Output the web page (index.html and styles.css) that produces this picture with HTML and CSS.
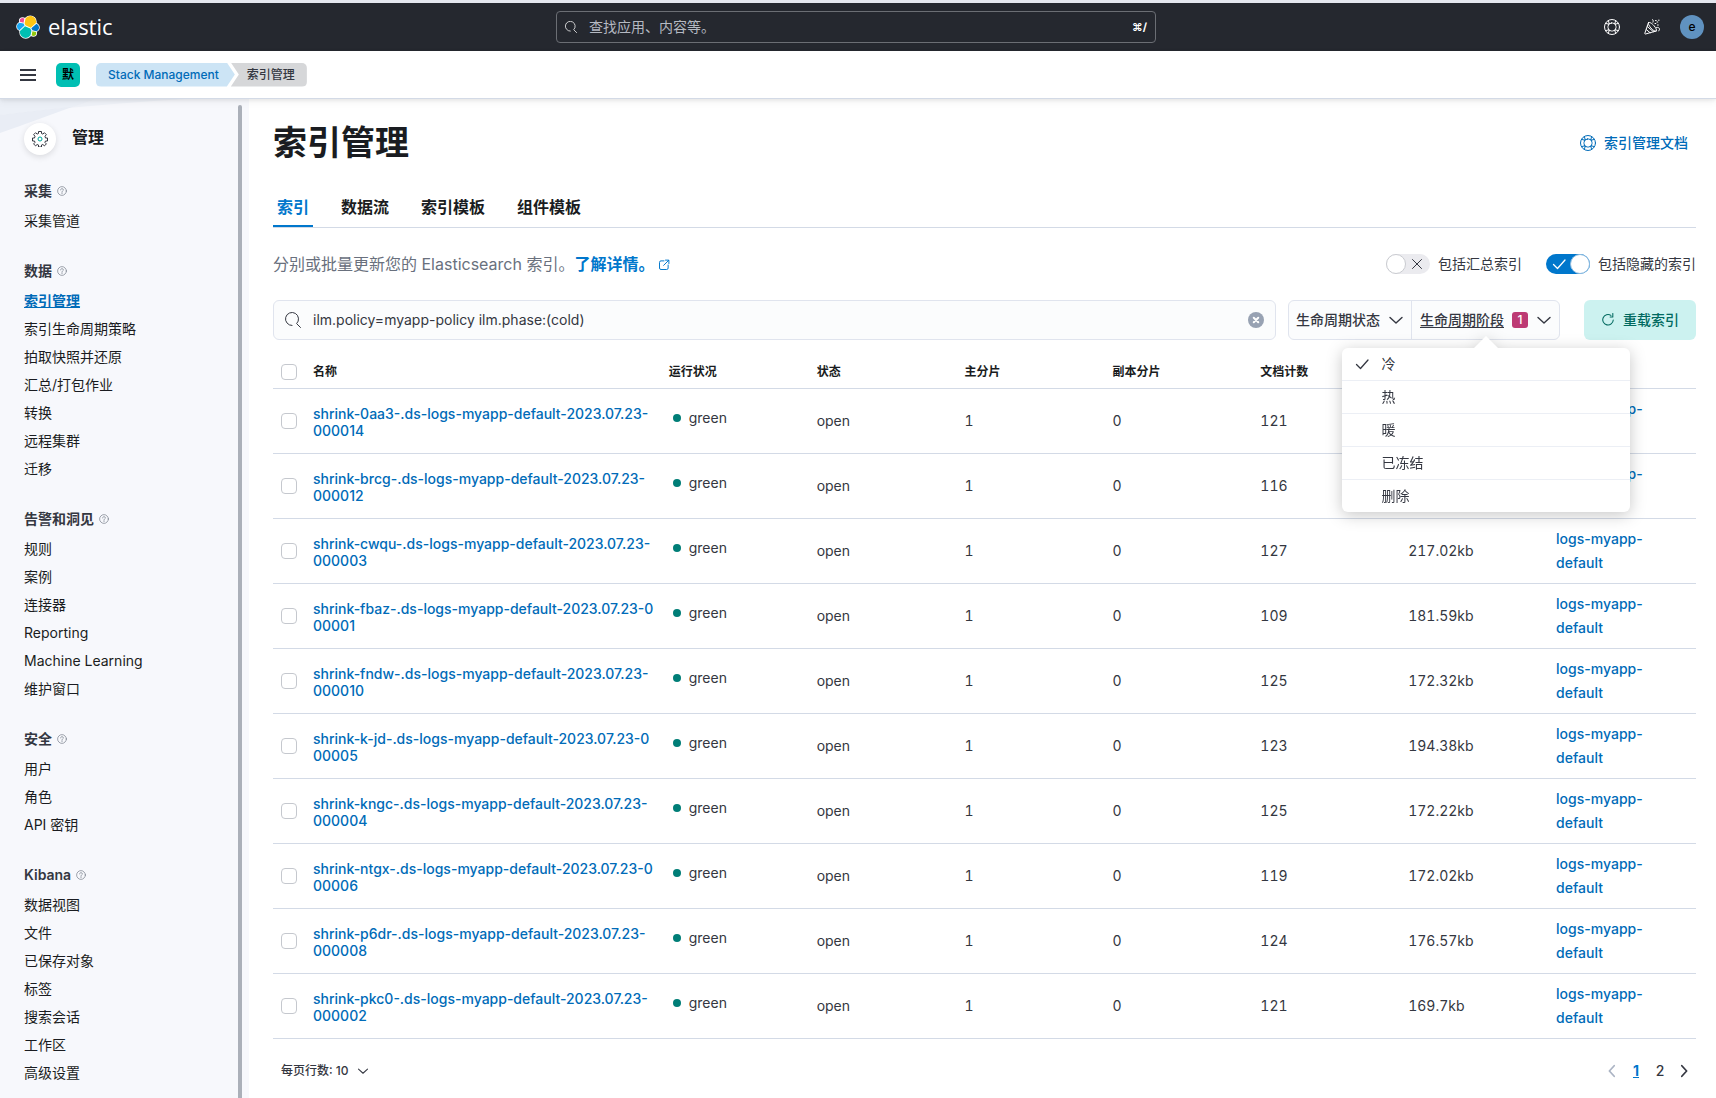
FILE: index.html
```html
<!DOCTYPE html>
<html lang="zh-CN">
<head>
<meta charset="utf-8">
<meta name="viewport" content="width=device-width, initial-scale=1">
<title>索引管理 - Elastic</title>
<link rel="stylesheet" href="styles.css">
</head>
<body>
<svg class="sprite" aria-hidden="true">
  <symbol id="i-search" viewBox="0 0 16 16"><path d="M7 13.5A6.5 6.5 0 1 1 11.6 11.6L15.5 15.5" /></symbol>
  <symbol id="i-help" viewBox="0 0 16 16"><circle cx="8" cy="8" r="7.5"/><rect x="4" y="4" width="8" height="8" rx="3.4"/><path d="M1.6 4.4l3.2.8M4.4 1.6l.8 3.2M14.4 4.4l-3.2.8M11.6 1.6l-.8 3.2M1.6 11.6l3.2-.8M4.4 14.4l.8-3.2M14.4 11.6l-3.2-.8M11.6 14.4l-.8-3.2"/></symbol>
  <symbol id="i-cheer" viewBox="0 0 16 16"><path d="M4.5 3.5L.8 14.3c-.1.5.3.9.7.7L12.300 12M4.500 3.500c1-.8 3.600 1 5.500 3.200s3 4.600 2.300 5.300c-1 .8-3.700-.9-5.500-3.100S3.700 4.300 4.500 3.500zM3.200 7.500l6.200 5.200M2.200 10.500l3.900 3.200M8.500.5c.8.500 1 1.600.5 2.700M12.500 8.500c1.500-.5 2.800.3 3 1.500s-.3 1.800-.8 1.800"/><path d="M11 4.500h.8M13 3h.8M14.500 1.200h.6M11.500 1.500h.7M13.500 6h.8"/></symbol>
  <symbol id="i-question" viewBox="0 0 16 16"><circle cx="8" cy="8" r="7"/><path d="M5.800 6.300c0-1.300 1-2.100 2.200-2.100s2.200.8 2.200 2c0 1.600-2.200 1.600-2.200 3.300M8 11v1.200"/></symbol>
  <symbol id="i-down" viewBox="0 0 16 16"><path stroke-width="1.400" d="M2 5.500l6 5.500 6-5.500"/></symbol>
  <symbol id="i-check" viewBox="0 0 16 16"><path stroke-width="1.300" d="M2.500 8.500l4 4 7.500-8.500"/></symbol>
  <symbol id="i-cross" viewBox="0 0 16 16"><path d="M3.500 3.500l9 9M12.500 3.500l-9 9"/></symbol>
  <symbol id="i-refresh" viewBox="0 0 16 16"><path stroke-width="1.200" d="M11.300 2.700A6 6 0 1 0 14 8M10.500 4.500h3v-4"/></symbol>
  <symbol id="i-popout" viewBox="0 0 16 16"><path stroke-width="1.300" d="M8 2.500H4a2 2 0 0 0-2 2V12a2 2 0 0 0 2 2h7.500a2 2 0 0 0 2-2V8M10 1.500h4.500V6M14.300 1.700L7.500 8.500"/></symbol>
  <symbol id="i-left" viewBox="0 0 16 16"><path d="M10.500 2L5 8l5.500 6"/></symbol>
  <symbol id="i-right" viewBox="0 0 16 16"><path d="M5.500 2L11 8l-5.500 6"/></symbol>
</svg>

<header class="topbar">
  <a class="brand" href="#" aria-label="elastic">
    <svg class="brand-mark" viewBox="0 0 32 32" aria-hidden="true">
      <g fill="#fff" stroke="#fff" stroke-width="2.400" stroke-linejoin="round">
        <circle cx="19" cy="9.200" r="7.500"/><circle cx="13" cy="22.800" r="7.500"/><circle cx="8.800" cy="7.800" r="3.700"/><circle cx="6.500" cy="15.300" r="5"/><circle cx="23.200" cy="24.100" r="3.700"/><circle cx="25.500" cy="16.600" r="5"/>
      </g>
      <path fill="#fec514" d="M12.580 13.787l7.002 3.211 7.066-6.213a7.849 7.849 0 0 0 .152-1.557c0-4.287-3.462-7.763-7.732-7.763-2.580 0-4.994 1.276-6.430 3.410l-1.176 6.130z"/>
      <path fill="#00bfb3" d="M5.333 21.228A7.964 7.964 0 0 0 5.180 22.800c0 4.304 3.482 7.792 7.780 7.792a7.770 7.770 0 0 0 6.460-3.440l1.165-6.102-1.556-2.991-7.030-3.219z"/>
      <path fill="#f04e98" d="M5.288 9.067l4.800 1.137L11.140 4.730a3.785 3.785 0 0 0-2.298-.776 3.814 3.814 0 0 0-3.799 3.821c0 .443.083.879.245 1.292z"/>
      <path fill="#1ba9f5" d="M4.872 10.214c-2.144.714-3.642 2.779-3.642 5.051a5.323 5.323 0 0 0 3.407 4.967l6.735-6.117-1.236-2.654z"/>
      <path fill="#93c90e" d="M20.873 27.152a3.767 3.767 0 0 0 2.284.772 3.814 3.814 0 0 0 3.800-3.820c0-.445-.080-.881-.246-1.293l-4.796-1.127z"/>
      <path fill="#0077cc" d="M21.848 20.430l5.280 1.238c2.144-.714 3.642-2.779 3.642-5.052a5.310 5.310 0 0 0-3.415-4.957l-6.906 6.075z"/>
    </svg>
    <span class="brand-name">elastic</span>
  </a>
  <div class="global-search">
    <svg class="icon icon-12"><use href="#i-search"/></svg>
    <input type="search" aria-label="全局搜索" placeholder="查找应用、内容等。">
    <kbd>⌘/</kbd>
  </div>
  <div class="top-actions">
    <button type="button" aria-label="帮助"><svg class="icon"><use href="#i-help"/></svg></button>
    <button type="button" aria-label="新闻"><svg class="icon"><use href="#i-cheer"/></svg></button>
    <button type="button" class="user-avatar" aria-label="用户">e</button>
  </div>
</header>

<div class="navbar">
  <button type="button" class="menu-toggle" aria-label="菜单"><span></span><span></span><span></span></button>
  <button type="button" class="space-avatar" aria-label="工作区">默</button>
  <nav class="breadcrumbs" aria-label="路径">
    <a class="crumb crumb-first" href="#">Stack Management</a>
    <span class="crumb crumb-last">索引管理</span>
  </nav>
</div>

<div class="layout">
  <aside class="sidebar">
    <svg class="sidebar-art" viewBox="0 0 240 36" aria-hidden="true"><path fill="#eff2f8" d="M0 16C60 9 120 4 185 0H0z"/><path fill="#e9edf5" d="M0 16c25-3 48-6 72-8C48 17 25 25 0 34z"/><path fill="#e9edf5" d="M0 0h95L72 8 0 16z" opacity=".5"/></svg>
    <div class="sidebar-title">
      <span class="gear"><svg viewBox="0 0 16 16" aria-hidden="true"><path fill="none" stroke="#343741" d="M6.500 .500h3v2l1.400.6 1.500-1.400 2 2-1.400 1.500.5 1.800h2v3h-2l-.6 1.400 1.500 1.500-2 2-1.500-1.400-1.400.5v2h-3v-2l-1.400-.5-1.500 1.400-2-2 1.400-1.500-.5-1.400h-2v-3h2l.5-1.800-1.400-1.500 2-2 1.500 1.400 1.400-.6z"/><circle cx="8" cy="8" r="2" fill="none" stroke="#00a69b"/></svg></span>
      <h2>管理</h2>
    </div>
    <nav aria-label="管理">
      <section><h3>采集 <svg class="icon icon-hint"><use href="#i-question"/></svg></h3>
        <ul><li><a href="#">采集管道</a></li></ul></section>
      <section><h3>数据 <svg class="icon icon-hint"><use href="#i-question"/></svg></h3>
        <ul><li><a class="current" href="#">索引管理</a></li><li><a href="#">索引生命周期策略</a></li><li><a href="#">拍取快照并还原</a></li><li><a href="#">汇总/打包作业</a></li><li><a href="#">转换</a></li><li><a href="#">远程集群</a></li><li><a href="#">迁移</a></li></ul></section>
      <section><h3>告警和洞见 <svg class="icon icon-hint"><use href="#i-question"/></svg></h3>
        <ul><li><a href="#">规则</a></li><li><a href="#">案例</a></li><li><a href="#">连接器</a></li><li><a href="#">Reporting</a></li><li><a href="#">Machine Learning</a></li><li><a href="#">维护窗口</a></li></ul></section>
      <section><h3>安全 <svg class="icon icon-hint"><use href="#i-question"/></svg></h3>
        <ul><li><a href="#">用户</a></li><li><a href="#">角色</a></li><li><a href="#">API 密钥</a></li></ul></section>
      <section><h3>Kibana <svg class="icon icon-hint"><use href="#i-question"/></svg></h3>
        <ul><li><a href="#">数据视图</a></li><li><a href="#">文件</a></li><li><a href="#">已保存对象</a></li><li><a href="#">标签</a></li><li><a href="#">搜索会话</a></li><li><a href="#">工作区</a></li><li><a href="#">高级设置</a></li></ul></section>
    </nav>
  </aside>

  <main class="content">
    <div class="page-head">
      <h1>索引管理</h1>
      <a class="doc-link" href="#"><svg class="icon"><use href="#i-help"/></svg>索引管理文档</a>
    </div>
    <nav class="tabs" aria-label="视图">
      <a class="tab active" href="#">索引</a>
      <a class="tab" href="#">数据流</a>
      <a class="tab" href="#">索引模板</a>
      <a class="tab" href="#">组件模板</a>
    </nav>
    <div class="intro">
      <p>分别或批量更新您的 Elasticsearch 索引。<a href="#">了解详情。<svg class="icon icon-12"><use href="#i-popout"/></svg></a></p>
      <div class="switches">
        <label class="switch"><input type="checkbox" role="switch"><span class="track"><svg class="icon icon-off"><use href="#i-cross"/></svg><svg class="icon icon-on"><use href="#i-check"/></svg></span>包括汇总索引</label>
        <label class="switch"><input type="checkbox" role="switch" checked><span class="track"><svg class="icon icon-off"><use href="#i-cross"/></svg><svg class="icon icon-on"><use href="#i-check"/></svg></span>包括隐藏的索引</label>
      </div>
    </div>
    <div class="toolbar">
      <div class="search-box">
        <svg class="icon"><use href="#i-search"/></svg>
        <input type="text" aria-label="搜索索引" value="ilm.policy=myapp-policy ilm.phase:(cold)">
        <button type="button" class="clear" aria-label="清除"><svg class="icon"><use href="#i-cross"/></svg></button>
      </div>
      <div class="filters">
        <button type="button" class="filter">生命周期状态<svg class="icon"><use href="#i-down"/></svg></button>
        <div class="filter-wrap">
          <button type="button" class="filter" aria-expanded="true"><span class="filter-active">生命周期阶段</span><span class="badge">1</span><svg class="icon"><use href="#i-down"/></svg></button>
          <div class="popover">
            <ul role="listbox" aria-label="生命周期阶段">
              <li role="option" aria-selected="true"><svg class="icon"><use href="#i-check"/></svg>冷</li>
              <li role="option">热</li>
              <li role="option">暖</li>
              <li role="option">已冻结</li>
              <li role="option">删除</li>
            </ul>
          </div>
        </div>
      </div>
      <button type="button" class="reload"><svg class="icon icon-14"><use href="#i-refresh"/></svg>重载索引</button>
    </div>

    <table class="indices">
      <colgroup><col class="col-check"><col class="col-name"><col><col><col><col><col><col><col></colgroup>
      <thead><tr><th><input type="checkbox" aria-label="全选"></th><th>名称</th><th>运行状况</th><th>状态</th><th>主分片</th><th>副本分片</th><th>文档计数</th><th>存储大小</th><th>数据流</th></tr></thead>
      <tbody>
        <tr><td><input type="checkbox" aria-label="选择此行"></td><td><a class="name" href="#">shrink-0aa3-.ds-logs-myapp-default-2023.07.23-<br>000014</a></td><td><span class="health">green</span></td><td>open</td><td>1</td><td>0</td><td>121</td><td>179.42kb</td><td><a href="#">logs-myapp-default</a></td></tr>
        <tr><td><input type="checkbox" aria-label="选择此行"></td><td><a class="name" href="#">shrink-brcg-.ds-logs-myapp-default-2023.07.23-<br>000012</a></td><td><span class="health">green</span></td><td>open</td><td>1</td><td>0</td><td>116</td><td>175.16kb</td><td><a href="#">logs-myapp-default</a></td></tr>
        <tr><td><input type="checkbox" aria-label="选择此行"></td><td><a class="name" href="#">shrink-cwqu-.ds-logs-myapp-default-2023.07.23-<br>000003</a></td><td><span class="health">green</span></td><td>open</td><td>1</td><td>0</td><td>127</td><td>217.02kb</td><td><a href="#">logs-myapp-default</a></td></tr>
        <tr><td><input type="checkbox" aria-label="选择此行"></td><td><a class="name" href="#">shrink-fbaz-.ds-logs-myapp-default-2023.07.23-0<br>00001</a></td><td><span class="health">green</span></td><td>open</td><td>1</td><td>0</td><td>109</td><td>181.59kb</td><td><a href="#">logs-myapp-default</a></td></tr>
        <tr><td><input type="checkbox" aria-label="选择此行"></td><td><a class="name" href="#">shrink-fndw-.ds-logs-myapp-default-2023.07.23-<br>000010</a></td><td><span class="health">green</span></td><td>open</td><td>1</td><td>0</td><td>125</td><td>172.32kb</td><td><a href="#">logs-myapp-default</a></td></tr>
        <tr><td><input type="checkbox" aria-label="选择此行"></td><td><a class="name" href="#">shrink-k-jd-.ds-logs-myapp-default-2023.07.23-0<br>00005</a></td><td><span class="health">green</span></td><td>open</td><td>1</td><td>0</td><td>123</td><td>194.38kb</td><td><a href="#">logs-myapp-default</a></td></tr>
        <tr><td><input type="checkbox" aria-label="选择此行"></td><td><a class="name" href="#">shrink-kngc-.ds-logs-myapp-default-2023.07.23-<br>000004</a></td><td><span class="health">green</span></td><td>open</td><td>1</td><td>0</td><td>125</td><td>172.22kb</td><td><a href="#">logs-myapp-default</a></td></tr>
        <tr><td><input type="checkbox" aria-label="选择此行"></td><td><a class="name" href="#">shrink-ntgx-.ds-logs-myapp-default-2023.07.23-0<br>00006</a></td><td><span class="health">green</span></td><td>open</td><td>1</td><td>0</td><td>119</td><td>172.02kb</td><td><a href="#">logs-myapp-default</a></td></tr>
        <tr><td><input type="checkbox" aria-label="选择此行"></td><td><a class="name" href="#">shrink-p6dr-.ds-logs-myapp-default-2023.07.23-<br>000008</a></td><td><span class="health">green</span></td><td>open</td><td>1</td><td>0</td><td>124</td><td>176.57kb</td><td><a href="#">logs-myapp-default</a></td></tr>
        <tr><td><input type="checkbox" aria-label="选择此行"></td><td><a class="name" href="#">shrink-pkc0-.ds-logs-myapp-default-2023.07.23-<br>000002</a></td><td><span class="health">green</span></td><td>open</td><td>1</td><td>0</td><td>121</td><td>169.7kb</td><td><a href="#">logs-myapp-default</a></td></tr>
      </tbody>
    </table>

    <div class="table-foot">
      <button type="button" class="page-size">每页行数: 10<svg class="icon icon-12"><use href="#i-down"/></svg></button>
      <nav class="pager" aria-label="分页">
        <button type="button" disabled aria-label="上一页"><svg class="icon"><use href="#i-left"/></svg></button>
        <button type="button" class="current" aria-current="page">1</button>
        <button type="button">2</button>
        <button type="button" aria-label="下一页"><svg class="icon"><use href="#i-right"/></svg></button>
      </nav>
    </div>
  </main>
</div>
</body>
</html>
```
FILE: styles.css
```css
:root {
  --ink: #1a1c21;
  --text: #343741;
  --subdued: #69707d;
  --link: #006bb8;
  --primary: #0077cc;
  --line: #d3dae6;
  --field: #fbfcfd;
}

*, *::before, *::after { box-sizing: border-box; }

body {
  margin: 0;
  min-height: 100vh;
  display: flex;
  flex-direction: column;
  background: #fff;
  color: var(--text);
  font: 14px/24px Inter, "Noto Sans CJK SC", sans-serif;
}

h1, h2, h3, p, ul { margin: 0; padding: 0; }
ul { list-style: none; }
a { color: var(--link); text-decoration: none; }
button, input { font: inherit; color: inherit; margin: 0; }
button { padding: 0; border: 0; background: none; cursor: pointer; }

.sprite { display: none; }
.icon {
  width: 16px;
  height: 16px;
  flex: none;
  fill: none;
  stroke: currentColor;
  stroke-linecap: round;
  stroke-linejoin: round;
}
.icon-12 { width: 12px; height: 12px; }
.icon-14 { width: 14px; height: 14px; }

/* Top bar */
.topbar {
  display: grid;
  grid-template-columns: 1fr minmax(0, 600px) 1fr;
  align-items: center;
  height: 51px;
  padding: 0 12px 0 8px;
  border-top: 3px solid #e4e7ee;
  background: #25282f;
  color: #fff;
}
.brand {
  display: flex;
  align-items: center;
  gap: 8px;
  padding-left: 8px;
  color: #fff;
}
.brand-mark { width: 24px; height: 24px; }
.brand-name { padding-bottom: 2px; font: 400 22px/24px "Open Sans", sans-serif; }
.global-search {
  display: flex;
  align-items: center;
  height: 32px;
  padding: 0 8px;
  border: 1px solid #6b6e74;
  border-radius: 4px;
}
.global-search input {
  flex: 1;
  min-width: 0;
  padding: 0 12px;
  border: 0;
  outline: 0;
  background: none;
}
.global-search input::placeholder { color: #b5b9c2; opacity: 1; }
.global-search kbd { font: 700 11px/16px Inter, "DejaVu Sans", sans-serif; }
.top-actions { display: flex; justify-content: flex-end; gap: 16px; }
.top-actions button {
  display: grid;
  place-items: center;
  width: 24px;
  height: 24px;
}
.top-actions .user-avatar {
  border-radius: 50%;
  background: #6092c0;
  color: #000;
  font-size: 12px;
  font-weight: 500;
}

/* Breadcrumb bar */
.navbar {
  position: relative;
  z-index: 2;
  display: flex;
  align-items: center;
  height: 48px;
  padding: 0 16px;
  border-bottom: 1px solid var(--line);
  background: #fff;
  box-shadow: 0 1px 4px rgba(0, 0, 0, .08), 0 3px 8px rgba(0, 0, 0, .05);
}
.menu-toggle {
  display: flex;
  flex-direction: column;
  gap: 3px;
  width: 24px;
  padding: 0 4px;
}
.menu-toggle span { height: 2px; background: var(--text); }
.space-avatar {
  width: 24px;
  height: 24px;
  margin: 0 16px;
  border-radius: 5px;
  background: #00bfb3;
  color: #000;
  font-size: 12px;
  font-weight: 600;
}
.breadcrumbs { display: flex; font-size: 12px; font-weight: 500; line-height: 16px; }
.crumb { padding: 4px 16px 4px 12px; }
.crumb-first {
  border-radius: 5px 0 0 5px;
  background: #cce4f5;
  clip-path: polygon(0 0, calc(100% - 8px) 0, 100% 50%, calc(100% - 8px) 100%, 0 100%);
}
.crumb-last {
  margin-left: -4px;
  padding: 4px 12px 4px 16px;
  border-radius: 0 5px 5px 0;
  background: #d6d7d9;
  clip-path: polygon(0 0, 100% 0, 100% 100%, 0 100%, 8px 50%);
}

/* Sidebar */
.layout { display: flex; flex: 1; }
.sidebar {
  position: relative;
  flex: 0 0 249px;
  padding: 24px 24px 8px;
  background: #f7f8fc;
}
.sidebar::after {
  content: "";
  position: absolute;
  top: 6px;
  right: 7px;
  bottom: 0;
  width: 4px;
  border-radius: 2px 2px 0 0;
  background: #abb0b9;
}
.sidebar-art { position: absolute; top: 0; left: 0; width: 240px; height: 36px; }
.sidebar-title { position: relative; display: flex; gap: 16px; margin-bottom: 22px; }
.sidebar-title h2 { font-size: 16px; line-height: 28px; font-weight: 600; color: var(--ink); }
.gear {
  display: grid;
  place-items: center;
  width: 32px;
  height: 32px;
  border-radius: 50%;
  background: #fff;
  box-shadow: 0 2px 6px rgba(0, 0, 0, .12);
}
.gear svg { width: 16px; height: 16px; }
.sidebar section { margin-bottom: 22px; }
.sidebar section:last-child { margin-bottom: 0; }
.sidebar h3 {
  display: flex;
  align-items: center;
  gap: 5px;
  margin-bottom: 2px;
  font-size: 14px;
  font-weight: 600;
  line-height: 28px;
}
.icon-hint { width: 10px; height: 10px; color: var(--subdued); }
.sidebar li { line-height: 28px; }
.sidebar li a { color: var(--ink); }
.sidebar li a.current {
  color: var(--link);
  font-weight: 600;
  text-decoration: underline;
}

/* Page */
.content {
  flex: 1;
  min-width: 0;
  padding: 24px 20px 12px 24px;
  background: #fff;
  box-shadow: -1px 0 5px rgba(30, 40, 70, .24);
}
.page-head { display: flex; justify-content: space-between; align-items: center; }
.page-head h1 { font-size: 34px; line-height: 40px; font-weight: 700; color: var(--ink); }
.doc-link { display: flex; align-items: center; gap: 8px; padding-right: 8px; font-weight: 500; }

.tabs {
  display: flex;
  gap: 24px;
  margin-top: 24px;
  border-bottom: 1px solid var(--line);
}
.tab { padding: 0 4px; font-size: 16px; font-weight: 600; line-height: 40px; color: var(--ink); }
.tab.active { color: var(--primary); box-shadow: inset 0 -2px var(--primary); }

.intro { display: flex; justify-content: space-between; align-items: center; margin: 24px 0; }
.intro p { font-size: 16px; color: var(--subdued); }
.intro p a { font-weight: 600; color: var(--primary); }
.intro p .icon { margin-left: 4px; vertical-align: -1px; }
.switches { display: flex; gap: 24px; }
.switch { display: flex; align-items: center; gap: 8px; }
.switch input { position: absolute; opacity: 0; }
.track {
  position: relative;
  display: flex;
  justify-content: flex-end;
  align-items: center;
  width: 44px;
  height: 20px;
  padding: 0 5px;
  border-radius: 10px;
  background: #ebebef;
}
.track::before {
  content: "";
  position: absolute;
  top: 0;
  left: 0;
  width: 20px;
  height: 20px;
  border: 1px solid #c9cbd0;
  border-radius: 50%;
  background: #fff;
}
.icon-on { display: none; }
input:checked + .track { justify-content: flex-start; background: var(--primary); color: #fff; }
input:checked + .track::before { left: auto; right: 0; border-color: #8dbbe0; }
input:checked + .track .icon-on { display: block; }
input:checked + .track .icon-off { display: none; }

.toolbar { display: flex; height: 40px; }
.search-box {
  display: flex;
  align-items: center;
  flex: 1;
  min-width: 0;
  margin-right: 12px;
  padding: 0 11px;
  border: 1px solid #e0e4ee;
  border-radius: 6px;
  background: var(--field);
}
.search-box input {
  flex: 1;
  min-width: 0;
  padding: 0 12px;
  border: 0;
  outline: 0;
  background: none;
}
.clear {
  display: grid;
  place-items: center;
  width: 16px;
  height: 16px;
  border-radius: 50%;
  background: #98a2b3;
  color: #fff;
}
.clear .icon { width: 8px; height: 8px; stroke-width: 4; }
.filters {
  display: flex;
  margin-right: 24px;
  border: 1px solid #e0e4ee;
  border-radius: 6px;
  background: var(--field);
}
.filter {
  display: flex;
  align-items: center;
  gap: 8px;
  height: 38px;
  padding: 0 7px;
  font-weight: 500;
}
.filter-wrap { position: relative; border-left: 1px solid #e0e4ee; }
.filter-wrap .filter { padding-left: 8px; }
.filter-active { text-decoration: underline; text-underline-offset: 2px; }
.badge {
  width: 16px;
  border-radius: 3px;
  background: #bd3a74;
  color: #fff;
  font-size: 12px;
  line-height: 16px;
}
.popover {
  position: absolute;
  z-index: 1;
  top: 47px;
  left: 50%;
  width: 288px;
  margin-left: -144px;
  border-radius: 6px;
  background: #fff;
  filter: drop-shadow(0 3px 8px rgba(0, 0, 0, .22));
}
.popover::before {
  content: "";
  position: absolute;
  top: -12px;
  left: 132px;
  border: 12px solid transparent;
  border-top: 0;
  border-bottom-color: #fff;
}
.popover li {
  position: relative;
  padding-left: 40px;
  line-height: 32px;
}
.popover li + li { border-top: 1px solid #eceff5; }
.popover li .icon { position: absolute; top: 8px; left: 12px; }
.reload {
  display: flex;
  align-items: center;
  justify-content: center;
  gap: 8px;
  width: 112px;
  border-radius: 6px;
  background: #ccf2f0;
  color: #00695f;
  font-weight: 500;
}

/* Index table */
.indices {
  width: 100%;
  margin-top: 16px;
  table-layout: fixed;
  border-collapse: separate;
  border-spacing: 0;
  font-feature-settings: "tnum";
}
.col-check { width: 32px; }
.col-name { width: 25%; }
.indices th {
  height: 33px;
  padding: 0 8px;
  border-bottom: 1px solid var(--line);
  color: var(--ink);
  font-size: 12px;
  font-weight: 600;
  line-height: 16px;
  text-align: left;
}
.indices td { height: 65px; padding: 8px; border-bottom: 1px solid var(--line); }
.indices a { font-weight: 500; font-feature-settings: normal; }
.indices .name {
  display: block;
  padding-top: 2px;
  line-height: 17px;
  white-space: nowrap;
}
.indices input {
  display: block;
  appearance: none;
  width: 16px;
  height: 16px;
  border: 1px solid #c5c8ce;
  border-radius: 4px;
  background: #fff;
}
.health { display: flex; align-items: center; gap: 8px; padding: 0 0 6px 4px; }
.health::before {
  content: "";
  width: 8px;
  height: 8px;
  border-radius: 50%;
  background: #007e77;
}

.table-foot { display: flex; justify-content: space-between; align-items: center; margin-top: 20px; }
.page-size {
  display: flex;
  align-items: center;
  gap: 8px;
  padding-left: 8px;
  font-size: 12px;
  font-weight: 500;
}
.pager { display: flex; }
.pager button {
  display: grid;
  place-items: center;
  width: 24px;
  height: 24px;
  font-weight: 500;
}
.pager .icon { stroke-width: 2; width: 14px; height: 14px; }
.pager button:disabled { color: #abb4c4; }
.pager .current { color: var(--primary); font-weight: 700; text-decoration: underline; }
```
